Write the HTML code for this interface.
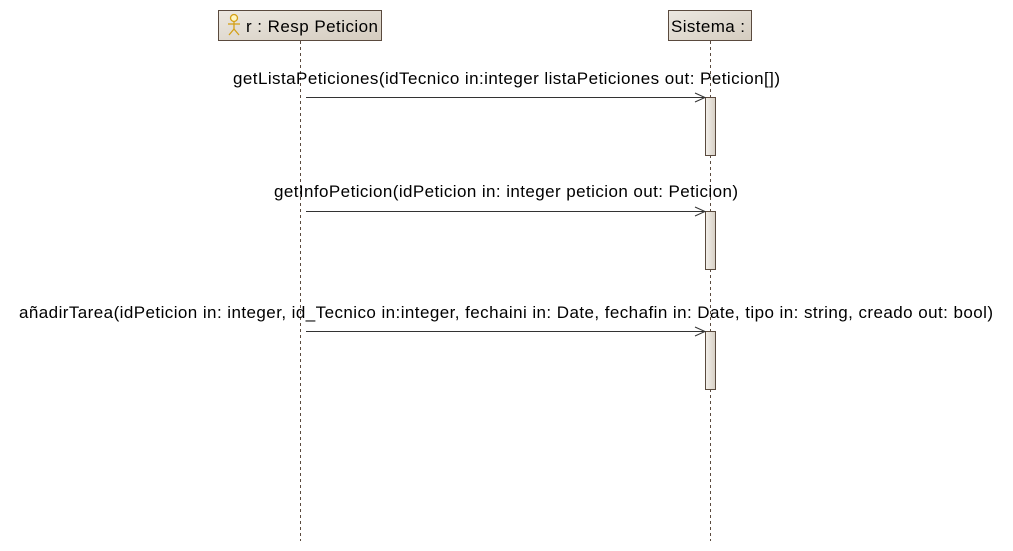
<!DOCTYPE html>
<html><head><meta charset="utf-8"><style>
html,body{margin:0;padding:0;background:#fff;width:1013px;height:551px;overflow:hidden}
text{font-family:"Liberation Sans",Arial,sans-serif;font-size:17px;fill:#000}
</style></head><body>
<svg width="1013" height="551" xmlns="http://www.w3.org/2000/svg">
<defs>
<linearGradient id="g" x1="0" y1="0" x2="1" y2="1">
<stop offset="0" stop-color="#ece8e1"/><stop offset="1" stop-color="#d4ccbf"/>
</linearGradient>
<linearGradient id="a" x1="0" y1="0" x2="1" y2="0">
<stop offset="0" stop-color="#f4f1ec"/><stop offset="1" stop-color="#d6cfc4"/>
</linearGradient>
</defs>
<g stroke="#5a4a3e" stroke-dasharray="3,3" stroke-width="1">
<line x1="300.5" y1="41" x2="300.5" y2="541"/>
<line x1="710.5" y1="41" x2="710.5" y2="541"/>
</g>
<rect x="218.5" y="10.5" width="163" height="30" fill="url(#g)" stroke="#5a4a3e"/>
<g stroke="#d4a017" fill="none" stroke-width="1.3">
<circle cx="234" cy="18" r="3.5" fill="#fff6c0"/>
<line x1="234" y1="21.5" x2="234" y2="29"/>
<line x1="228" y1="24" x2="240" y2="24"/>
<line x1="234" y1="29" x2="229" y2="35"/>
<line x1="234" y1="29" x2="239" y2="35"/>
</g>
<text x="246" y="32" textLength="132">r : Resp Peticion</text>
<rect x="668.5" y="10.5" width="83" height="30" fill="url(#g)" stroke="#5a4a3e"/>
<text x="671" y="32" textLength="74">Sistema :</text>
<g fill="url(#a)" stroke="#5a4a3e">
<rect x="705.5" y="97.5" width="10" height="58"/>
<rect x="705.5" y="211.5" width="10" height="58"/>
<rect x="705.5" y="331.5" width="10" height="58"/>
</g>
<g stroke="#333" fill="none" stroke-width="1">
<line x1="306" y1="97.5" x2="705" y2="97.5"/><polyline points="695,93 705,97.5 695,102"/>
<line x1="306" y1="211.5" x2="705" y2="211.5"/><polyline points="695,207 705,211.5 695,216"/>
<line x1="306" y1="331.5" x2="705" y2="331.5"/><polyline points="695,327 705,331.5 695,336"/>
</g>
<text x="233" y="84" textLength="547">getListaPeticiones(idTecnico in:integer listaPeticiones out: Peticion[])</text>
<text x="274" y="197" textLength="464">getInfoPeticion(idPeticion in: integer peticion out: Peticion)</text>
<text x="19" y="318" textLength="974">añadirTarea(idPeticion in: integer, id_Tecnico in:integer, fechaini in: Date, fechafin in: Date, tipo in: string, creado out: bool)</text>
</svg>
</body></html>
